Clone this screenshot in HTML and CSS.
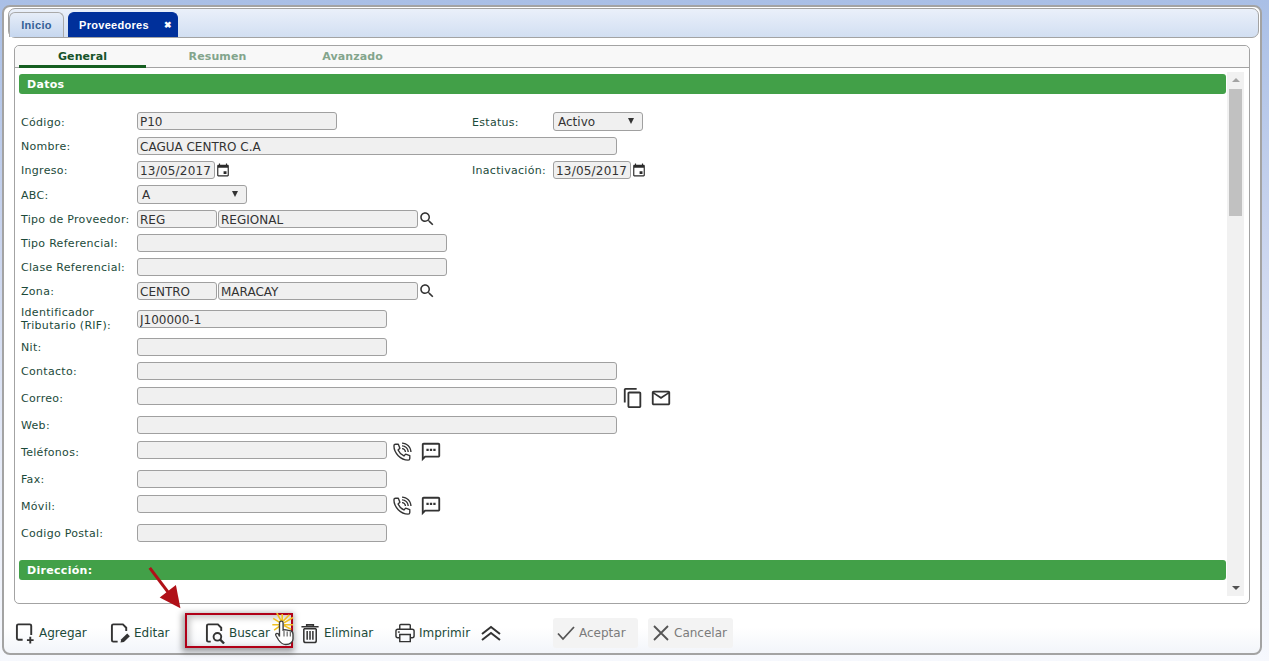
FILE: index.html
```html
<!DOCTYPE html>
<html lang="es">
<head>
<meta charset="utf-8">
<title>Proveedores</title>
<link rel="stylesheet" href="styles.css">
</head>
<body>
<svg class="defs" width="0" height="0" aria-hidden="true">
  <defs>
    <symbol id="i-cal" viewBox="0 0 24 24"><path d="M20 3h-1V1h-2v2H7V1H5v2H4c-1.1 0-2 .9-2 2v16c0 1.100.9 2 2 2h16c1.100 0 2-.9 2-2V5c0-1.100-.9-2-2-2zm0 18H4V8h16v13zM13 14h5v5h-5z"/></symbol>
    <symbol id="i-search" viewBox="0 0 24 24"><path d="M15.500 14h-.79l-.28-.27C15.410 12.590 16 11.110 16 9.500 16 5.910 13.090 3 9.500 3S3 5.910 3 9.500 5.910 16 9.500 16c1.610 0 3.090-.59 4.230-1.570l.27.28v.79l5 4.990L20.490 19l-4.990-5zm-6 0C7.010 14 5 11.990 5 9.500S7.010 5 9.500 5 14 7.010 14 9.500 11.990 14 9.500 14z"/></symbol>
    <symbol id="i-phone" viewBox="0 0 24 24"><path d="M15 12h1.500c0-2.500-2-4.500-4.500-4.500V9c1.660 0 3 1.340 3 3zm3 0h1.500c0-4.140-3.360-7.500-7.500-7.500V6c3.310 0 6 2.690 6 6zm3 0h1.500C22.500 6.200 17.800 1.500 12 1.500V3c4.970 0 9 4.030 9 9z"/><path fill="none" stroke="currentColor" stroke-width="1.500" stroke-linejoin="round" d="M5 3.500h3l1.700 4.500-2 1.900c1.200 2.700 3.700 5.200 6.400 6.400l1.900-2 4.500 1.700v3c0 1-.8 1.800-1.800 1.800C10.500 20.600 3.200 13.300 3.200 5.300 3.200 4.300 4 3.500 5 3.500z"/></symbol>
    <symbol id="i-sms" viewBox="0 0 24 24"><path d="M20 2H4c-1.100 0-2 .9-2 2v18l4-4h14c1.100 0 2-.9 2-2V4c0-1.100-.9-2-2-2zm0 14H5.170L4 17.170V4h16v12zM7 8.500h2.500V11H7zm3.750 0h2.500V11h-2.500zm3.750 0H17V11h-2.500z"/></symbol>
    <symbol id="i-copy" viewBox="0 0 24 24"><path d="M16 1H4c-1.100 0-2 .9-2 2v14h2V3h12V1zm3 4H8c-1.100 0-2 .9-2 2v14c0 1.100.9 2 2 2h11c1.100 0 2-.9 2-2V7c0-1.100-.9-2-2-2zm0 16H8V7h11v14z"/></symbol>
    <symbol id="i-mail" viewBox="0 0 24 24"><path d="M20 4H4c-1.100 0-2 .9-2 2v12c0 1.100.9 2 2 2h16c1.100 0 2-.9 2-2V6c0-1.100-.9-2-2-2zm0 14H4V7.500l8 5.500 8-5.500V18zm-8-7.500L4.500 6h15L12 10.500z"/></symbol>
  </defs>
</svg>

<main class="window">
  <nav class="tabbar">
    <a class="tab">Inicio</a>
    <a class="tab tab-active">Proveedores <span class="tab-close">✖</span></a>
  </nav>

  <section class="card">
    <nav class="subtabs">
      <a class="subtab subtab-active">General</a>
      <a class="subtab">Resumen</a>
      <a class="subtab">Avanzado</a>
    </nav>

    <div class="card-body">
      <div class="scroll-content">
        <h2 class="section">Datos</h2>
        <div class="form">
          <div class="row row-sel">
            <label class="lbl">Código:</label>
            <input class="inp w200" value="P10" readonly>
            <label class="lbl lbl2 gap-status">Estatus:</label>
            <div class="sel w90">Activo<span class="caret"></span></div>
          </div>
          <div class="row">
            <label class="lbl">Nombre:</label>
            <input class="inp w480" value="CAGUA CENTRO C.A" readonly>
          </div>
          <div class="row">
            <label class="lbl">Ingreso:</label>
            <input class="inp date" value="13/05/2017" readonly>
            <svg class="ico-cal"><use href="#i-cal"/></svg>
            <label class="lbl lbl2 gap-inact">Inactivación:</label>
            <input class="inp date" value="13/05/2017" readonly>
            <svg class="ico-cal"><use href="#i-cal"/></svg>
          </div>
          <div class="row row-sel">
            <label class="lbl">ABC:</label>
            <div class="sel w110">A<span class="caret"></span></div>
          </div>
          <div class="row">
            <label class="lbl">Tipo de Proveedor:</label>
            <input class="inp w80" value="REG" readonly>
            <input class="inp w200" value="REGIONAL" readonly>
            <svg class="ico-search"><use href="#i-search"/></svg>
          </div>
          <div class="row">
            <label class="lbl">Tipo Referencial:</label>
            <input class="inp w310" readonly>
          </div>
          <div class="row">
            <label class="lbl">Clase Referencial:</label>
            <input class="inp w310" readonly>
          </div>
          <div class="row">
            <label class="lbl">Zona:</label>
            <input class="inp w80" value="CENTRO" readonly>
            <input class="inp w200" value="MARACAY" readonly>
            <svg class="ico-search"><use href="#i-search"/></svg>
          </div>
          <div class="row row-two">
            <label class="lbl lbl-two">Identificador Tributario (RIF):</label>
            <input class="inp w250" value="J100000-1" readonly>
          </div>
          <div class="row">
            <label class="lbl">Nit:</label>
            <input class="inp w250" readonly>
          </div>
          <div class="row">
            <label class="lbl">Contacto:</label>
            <input class="inp w480" readonly>
          </div>
          <div class="row row-ico">
            <label class="lbl">Correo:</label>
            <input class="inp w480" readonly>
            <svg class="ico-lg ico-copy"><use href="#i-copy"/></svg>
            <svg class="ico-lg ico-mail"><use href="#i-mail"/></svg>
          </div>
          <div class="row">
            <label class="lbl">Web:</label>
            <input class="inp w480" readonly>
          </div>
          <div class="row row-ico">
            <label class="lbl">Teléfonos:</label>
            <input class="inp w250" readonly>
            <svg class="ico-lg ico-phone"><use href="#i-phone"/></svg>
            <svg class="ico-lg ico-sms"><use href="#i-sms"/></svg>
          </div>
          <div class="row">
            <label class="lbl">Fax:</label>
            <input class="inp w250" readonly>
          </div>
          <div class="row row-ico">
            <label class="lbl">Móvil:</label>
            <input class="inp w250" readonly>
            <svg class="ico-lg ico-phone"><use href="#i-phone"/></svg>
            <svg class="ico-lg ico-sms"><use href="#i-sms"/></svg>
          </div>
          <div class="row">
            <label class="lbl">Codigo Postal:</label>
            <input class="inp w250" readonly>
          </div>
        </div>
        <h2 class="section section-dir">Dirección:</h2>
      </div>
      <div class="scrollbar">
        <span class="arrow-up"></span>
        <span class="thumb"></span>
        <span class="arrow-down"></span>
      </div>
    </div>
  </section>

  <footer class="toolbar">
    <a class="tool">
      <svg class="tool-ico" viewBox="0 0 22 22"><path d="M8 18H3.500A1.500 1.500 0 0 1 2 16.500v-13A1.500 1.500 0 0 1 3.500 2h12A1.500 1.500 0 0 1 17 3.500V13" fill="none" stroke="currentColor" stroke-width="2"/><path d="M16 15v7M12.500 18.500h7" stroke="currentColor" stroke-width="2"/></svg>
      Agregar
    </a>
    <a class="tool">
      <svg class="tool-ico" viewBox="0 0 22 22"><path d="M8 20H3.500A1.500 1.500 0 0 1 2 18.500v-15A1.500 1.500 0 0 1 3.500 2h10l3.500 3.500V9" fill="none" stroke="currentColor" stroke-width="2"/><path d="M11 21l.8-3.500L18 11.500l2.800 2.800-6.200 6z" fill="currentColor"/></svg>
      Editar
    </a>
    <a class="tool">
      <svg class="tool-ico" viewBox="0 0 22 22"><path d="M6 20H3.500A1.500 1.500 0 0 1 2 18.500v-15A1.500 1.500 0 0 1 3.500 2h10L17 5.500V9" fill="none" stroke="currentColor" stroke-width="2"/><circle cx="13" cy="15" r="4" fill="none" stroke="currentColor" stroke-width="2"/><path d="M16 18l4 4" stroke="currentColor" stroke-width="2.400"/></svg>
      Buscar
    </a>
    <a class="tool">
      <svg class="tool-ico" viewBox="0 0 22 22"><path d="M7 4V2.500h7V4M1.500 4.500h18M4 6.500V19a2 2 0 0 0 2 2h9a2 2 0 0 0 2-2V6.500M4 6.500h13M7.500 9v9M10.500 9v9M13.500 9v9" fill="none" stroke="currentColor" stroke-width="1.600"/></svg>
      Eliminar
    </a>
    <a class="tool tool-print">
      <svg class="tool-ico" viewBox="0 0 22 22"><path d="M5 7V3a1 1 0 0 1 1-1h9a1 1 0 0 1 1 1v4M5 16H3a2 2 0 0 1-2-2v-5a2 2 0 0 1 2-2h15a2 2 0 0 1 2 2v5a2 2 0 0 1-2 2h-2M5 12.500h11V20H5z" fill="none" stroke="currentColor" stroke-width="1.500"/><path d="M3 10h2" stroke="currentColor" stroke-width="1.500"/></svg>
      Imprimir
    </a>
    <svg class="chev" viewBox="0 0 20 16"><path d="M1 9l9-7 9 7M1 15l9-7 9 7" fill="none" stroke="currentColor" stroke-width="2"/></svg>
    <button class="btn btn-first">
      <svg class="btn-ico" viewBox="0 0 18 18"><path d="M1 9.500l5 5.500L17 3" fill="none" stroke="currentColor" stroke-width="1.800"/></svg>
      Aceptar
    </button>
    <button class="btn">
      <svg class="btn-ico" viewBox="0 0 18 18"><path d="M2 2l14 14M16 2L2 16" fill="none" stroke="currentColor" stroke-width="1.800"/></svg>
      Cancelar
    </button>
  </footer>
</main>

<div class="highlight"></div>
<svg class="pointer" viewBox="0 0 26 40">
  <path d="M10 9L5 0M11 9L11 1M12 9l7-7M13 11l10-6M13 13h10M13 14l8 4M9 11L1 6M9 13H0M9 14l-7 5" fill="none" stroke="#f0c020" stroke-width="1.800"/>
  <path d="M8 26V11a2 2 0 0 1 4 0v8l2-.5 2.500.5 2.500.5 2 .5c1.500.5 2 2 2 4v5c0 3-3 6-8 6-4 0-6-2-8-5l-3-5c-1-2 1-3 2.500-2z" fill="#fff" stroke="#3c3c3c" stroke-width="1.500"/>
  <path d="M13 20v6M16.500 20.500v5.500M20 21v5" stroke="#555" stroke-width="1.200"/>
</svg>
<svg class="red-arrow" viewBox="0 0 40 50">
  <path d="M2 2l24 32" stroke="#b01018" stroke-width="3.400"/>
  <path d="M36 47L13 35l18-14z" fill="#b01018"/>
</svg>
</body>
</html>
```

FILE: styles.css
```css
* { box-sizing: border-box; }

html, body { height: 100%; }

body {
  margin: 0;
  height: 661px;
  overflow: hidden;
  padding: 5px 7px 6px 2px;
  background: linear-gradient(180deg, #a9bfe6 0%, #c9d4ee 35%, #e6ebf8 70%, #f6f8fd 100%);
  font-family: "DejaVu Sans", Verdana, sans-serif;
  font-size: 11px;
  color: #333;
  position: relative;
}

.defs { position: absolute; }

.window {
  height: 650px;
  border: 2px solid #a3a3a3;
  border-radius: 8px;
  padding: 1px 1px 0 4px;
  display: flex;
  flex-direction: column;
  background: linear-gradient(180deg, #fff 0%, #fff 96%, #f2f5fa 100%);
}

.tabbar {
  height: 30px;
  flex: none;
  display: flex;
  align-items: flex-end;
  gap: 4px;
  border: 1px solid #a3a3a3;
  border-radius: 7px;
  background: linear-gradient(180deg, #eaf0fa 0%, #d2dff2 100%);
}

.tab {
  width: 55px;
  height: 25px;
  display: flex;
  align-items: center;
  justify-content: center;
  font-family: "Liberation Sans", Arial, sans-serif;
  font-size: 11px;
  font-weight: 700;
  letter-spacing: .3px;
  color: #335f96;
  border: 1px solid #a9a9a9;
  border-bottom: 0;
  border-radius: 6px 6px 0 0;
  background: linear-gradient(180deg, #e6edf8 0%, #c6d7ef 100%);
}

.tab-active {
  width: 110px;
  justify-content: flex-start;
  padding-left: 10px;
  color: #fff;
  background: #00309b;
  border-color: #00309b;
}

.tab-close { margin-left: 15px; font-size: 9px; }

.card {
  height: 559px;
  flex: none;
  margin: 7px 9px 0 6px;
  border: 1px solid #a3a3a3;
  border-radius: 5px;
  display: flex;
  flex-direction: column;
}

.subtabs {
  height: 22px;
  flex: none;
  display: flex;
  padding-left: 4px;
  background: #f8f8f8;
  border-bottom: 1px solid #a3a3a3;
  border-radius: 5px 5px 0 0;
}

.subtab {
  width: 127px;
  margin-right: 8px;
  text-align: center;
  padding-top: 4px;
  font-weight: 700;
  font-size: 11px;
  letter-spacing: .1px;
  color: #83a58c;
}

.subtab-active {
  color: #155229;
  border-bottom: 3px solid #155e20;
  height: 22px;
}

.card-body {
  flex: 1;
  display: flex;
  min-height: 0;
  padding-top: 4px;
}

.scroll-content {
  flex: 1;
  overflow: hidden;
  padding: 2px 0 0 4px;
}

.section {
  margin: 0;
  height: 20px;
  background: #42a048;
  border-radius: 3px;
  padding: 4px 0 0 8px;
  color: #fff;
  font-size: 11px;
  line-height: 13px;
  font-weight: 700;
  letter-spacing: .3px;
}

.section-dir { margin-top: 18px; }

.form { padding: 18px 0 0 2px; }

.row {
  display: flex;
  align-items: center;
  height: 18px;
  margin-bottom: 6px;
}

.row-sel { height: 19px; align-items: flex-start; }

.row-two { height: 26px; }

.row-ico {
  height: 23px;
  margin-top: 7px;
  align-items: flex-start;
}

.lbl {
  width: 116px;
  flex: none;
  color: #1c4a3a;
  letter-spacing: .3px;
  line-height: 13px;
}

.row-sel .lbl { padding-top: 4px; }

.lbl-two { width: 110px; margin-right: 6px; }

.row-ico .lbl { padding-top: 5px; }

.lbl2 { width: auto; }

.gap-status { margin-left: 135px; width: 81px; }
.gap-inact { margin-left: 0; width: 81px; }

.inp, .sel {
  height: 18px;
  border: 1px solid #a0a0a0;
  border-radius: 3px;
  background: #f0f0f0;
  font-family: "DejaVu Sans", Verdana, sans-serif;
  font-size: 12px;
  color: #333;
  padding: 1px 2px 0;
  outline: 0;
  flex: none;
}

.date { width: 78px; padding: 1px 1px 0 2px; letter-spacing: .2px; }
.w80 { width: 80px; margin-right: 1px; }
.w200 { width: 200px; }
.w250 { width: 250px; }
.w310 { width: 310px; }
.w480 { width: 480px; }

.sel {
  position: relative;
  padding: 2px 4px 0;
  line-height: 15px;
  height: 19px;
}

.w90 { width: 90px; }
.w110 { width: 110px; }

.caret {
  position: absolute;
  right: 8px;
  top: 5px;
  border-left: 3.5px solid transparent;
  border-right: 3.5px solid transparent;
  border-top: 6px solid #333;
}

.ico-cal {
  width: 14px;
  height: 16px;
  flex: none;
  margin: 0 242px 0 1px;
  fill: #2b2b2b;
}

.ico-cal:last-child { margin: 0 0 0 1px; }

.ico-search {
  width: 18px;
  height: 18px;
  fill: #333;
}

.ico-lg {
  width: 22px;
  height: 22px;
  fill: #333;
  color: #333;
  flex: none;
}

.ico-copy { margin-left: 5px; }
.ico-mail { margin-left: 6px; }
.ico-phone { margin-left: 4px; }
.ico-sms { margin-left: 7px; }

.scrollbar {
  width: 17px;
  flex: none;
  height: 524px;
  margin: 0 5px 0 1px;
  background: #f1f1f1;
  display: flex;
  flex-direction: column;
  align-items: center;
}

.thumb {
  width: 13px;
  height: 127px;
  margin-top: 7px;
  background: #c1c1c1;
}

.arrow-up {
  margin-top: 6px;
  border-left: 4px solid transparent;
  border-right: 4px solid transparent;
  border-bottom: 4px solid #a3a3a3;
}

.arrow-down {
  margin-top: auto;
  margin-bottom: 6px;
  border-left: 4px solid transparent;
  border-right: 4px solid transparent;
  border-top: 4px solid #505050;
}

.toolbar {
  flex: 1;
  display: flex;
  align-items: center;
  padding: 8px 0 0 7px;
  font-size: 12px;
  color: #1c4a3a;
}

.tool {
  width: 95px;
  display: flex;
  align-items: center;
  gap: 3px;
}

.tool-print { width: 86px; }

.tool-ico {
  width: 21px;
  height: 22px;
  flex: none;
  color: #333;
}

.chev {
  width: 20px;
  height: 16px;
  color: #333;
  flex: none;
}

.btn {
  width: 85px;
  height: 30px;
  margin-left: 10px;
  border: 0;
  border-radius: 3px;
  background: #f3f3f3;
  color: #7b7b7b;
  font-family: "DejaVu Sans", Verdana, sans-serif;
  font-size: 12px;
  display: flex;
  align-items: center;
  gap: 4px;
  padding: 0 0 0 4px;
}

.btn-first { margin-left: 52px; }

.btn-ico {
  width: 18px;
  height: 18px;
  color: #555;
  flex: none;
}

/* Annotations drawn over the screenshot */
.highlight {
  position: absolute;
  left: 185px;
  top: 613px;
  width: 108px;
  height: 35px;
  border: 2px solid #b00018;
  box-shadow: -1px 2px 6px 2px rgba(0, 0, 0, .35), inset 2px 2px 6px 1px rgba(0, 0, 0, .22);
}

.pointer {
  position: absolute;
  left: 271px;
  top: 613px;
  width: 26px;
  height: 36px;
}

.red-arrow {
  position: absolute;
  left: 148px;
  top: 566px;
  width: 36px;
  height: 45px;
}
```
